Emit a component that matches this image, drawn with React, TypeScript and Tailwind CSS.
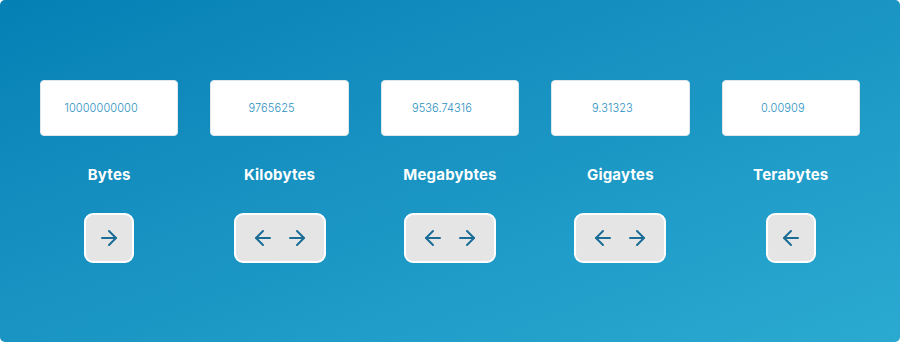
import { ArrowLeft, ArrowRight } from 'lucide-react';

const units = [
  { name: 'Bytes', value: '10000000000', left: false, right: true },
  { name: 'Kilobytes', value: '9765625', left: true, right: true },
  { name: 'Megabybtes', value: '9536.74316', left: true, right: true },
  { name: 'Gigaytes', value: '9.31323', left: true, right: true },
  { name: 'Terabytes', value: '0.00909', left: true, right: false },
];

export default function App() {
  return (
    <div className="w-[900px] h-[342px] bg-white">
      <div
        className="w-full h-full rounded-[5px] bg-gradient-to-br from-[#0580b5] to-[#2aaad1] px-[40px] pt-[80px] grid grid-cols-5 gap-x-[32px] content-start"
        style={{ fontFamily: 'Inter, "Noto Sans", sans-serif' }}
      >
        {units.map((u) => (
          <div key={u.name} className="flex flex-col items-center">
            {/* value box */}
            <div className="w-full h-[56px] bg-white rounded-[4px] border border-[#dfe7ec] flex items-center justify-center pr-4">
              <span className="text-[11px] text-[#2b90c2] font-light tracking-[0.1px]">{u.value}</span>
            </div>

            <div className="mt-[29px] h-[20px] leading-[20px] text-[15px] font-bold text-white tracking-[0.2px]">{u.name}</div>

            {/* arrows */}
            <div
              className={`mt-[28px] h-[50px] rounded-[9px] border-2 border-white bg-[#e5e5e5] flex items-center gap-[10px] text-[#1c6d96] ${
                u.left && u.right ? 'px-[15px]' : 'px-[11px]'
              }`}
            >
              {u.left && <ArrowLeft size={24} strokeWidth={2} />}
              {u.right && <ArrowRight size={24} strokeWidth={2} />}
            </div>
          </div>
        ))}
      </div>
    </div>
  );
}
